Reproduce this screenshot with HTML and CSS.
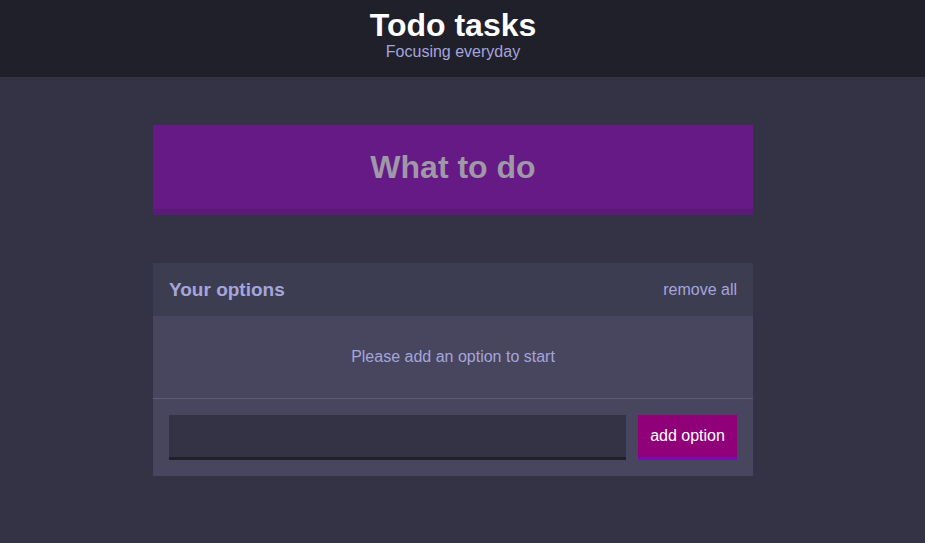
FILE: index.html
```html
<!DOCTYPE html>
<html lang="en">
<head>
<meta charset="utf-8">
<title>Todo tasks</title>
<link rel="stylesheet" href="styles.css">
</head>
<body>
<header class="header">
  <h1 class="header-title">Todo tasks</h1>
  <h2 class="header-subtitle">Focusing everyday</h2>
</header>
<main class="main">
  <div class="container">
    <button class="big-button" disabled>What to do</button>
    <section class="widget">
      <div class="widget-header">
        <h3 class="widget-title">Your options</h3>
        <button class="link-button">remove all</button>
      </div>
      <p class="widget-message">Please add an option to start</p>
      <form class="add-option">
        <input class="add-option-input" type="text" name="option">
        <button class="button" type="button">add option</button>
      </form>
    </section>
  </div>
</main>
</body>
</html>
```
FILE: styles.css
```css
* { box-sizing: border-box; }
html, body {
  margin: 0;
  padding: 0;
  height: 100%;
}
body {
  background: #333345;
  font-family: "Liberation Sans", Arial, sans-serif;
  font-size: 16px;
}
.header {
  background: #20202b;
  padding: 7px 19px 16px 0;
  text-align: center;
}
.header-title {
  margin: 0;
  color: #ffffff;
  font-size: 32px;
  font-weight: bold;
  line-height: 36px;
}
.header-subtitle {
  margin: 0;
  color: #a5a5dc;
  font-size: 16px;
  font-weight: normal;
  line-height: 18px;
}
.main {
  padding: 48px 19px 0 0;
}
.container {
  width: 600px;
  margin: 0 auto;
}
.big-button {
  display: block;
  width: 100%;
  background: #661a85;
  border: none;
  border-bottom: 6px solid #5c1978;
  color: #9f98a9;
  font-family: inherit;
  font-size: 32px;
  font-weight: bold;
  line-height: 37px;
  padding: 24px 0 23px;
  margin: 0 0 48px;
}
.widget {
  background: #47465e;
}
.widget-header {
  background: #3d3d51;
  display: flex;
  justify-content: space-between;
  align-items: center;
  padding: 0 16px;
  height: 53px;
}
.widget-title {
  margin: 0;
  color: #a5a5dc;
  font-size: 19px;
  font-weight: bold;
}
.link-button {
  background: none;
  border: none;
  padding: 0;
  color: #a5a5dc;
  font-family: inherit;
  font-size: 16px;
}
.widget-message {
  margin: 0;
  color: #a5a5dc;
  text-align: center;
  height: 83px;
  line-height: 81px;
  border-bottom: 1px solid #5e5a7c;
}
.add-option {
  display: flex;
  gap: 12px;
  padding: 16px;
}
.add-option-input {
  flex: 1;
  height: 45px;
  background: #333345;
  border: none;
  border-bottom: 3px solid #20202b;
  color: #a5a5dc;
  font-family: inherit;
  font-size: 16px;
  padding: 0 12px;
  outline: none;
}
.button {
  width: 99px;
  height: 45px;
  background: #8f0079;
  border: none;
  border-bottom: 3px solid #7a0ab4;
  color: #ffffff;
  font-family: inherit;
  font-size: 16px;
  padding: 0;
}
```
